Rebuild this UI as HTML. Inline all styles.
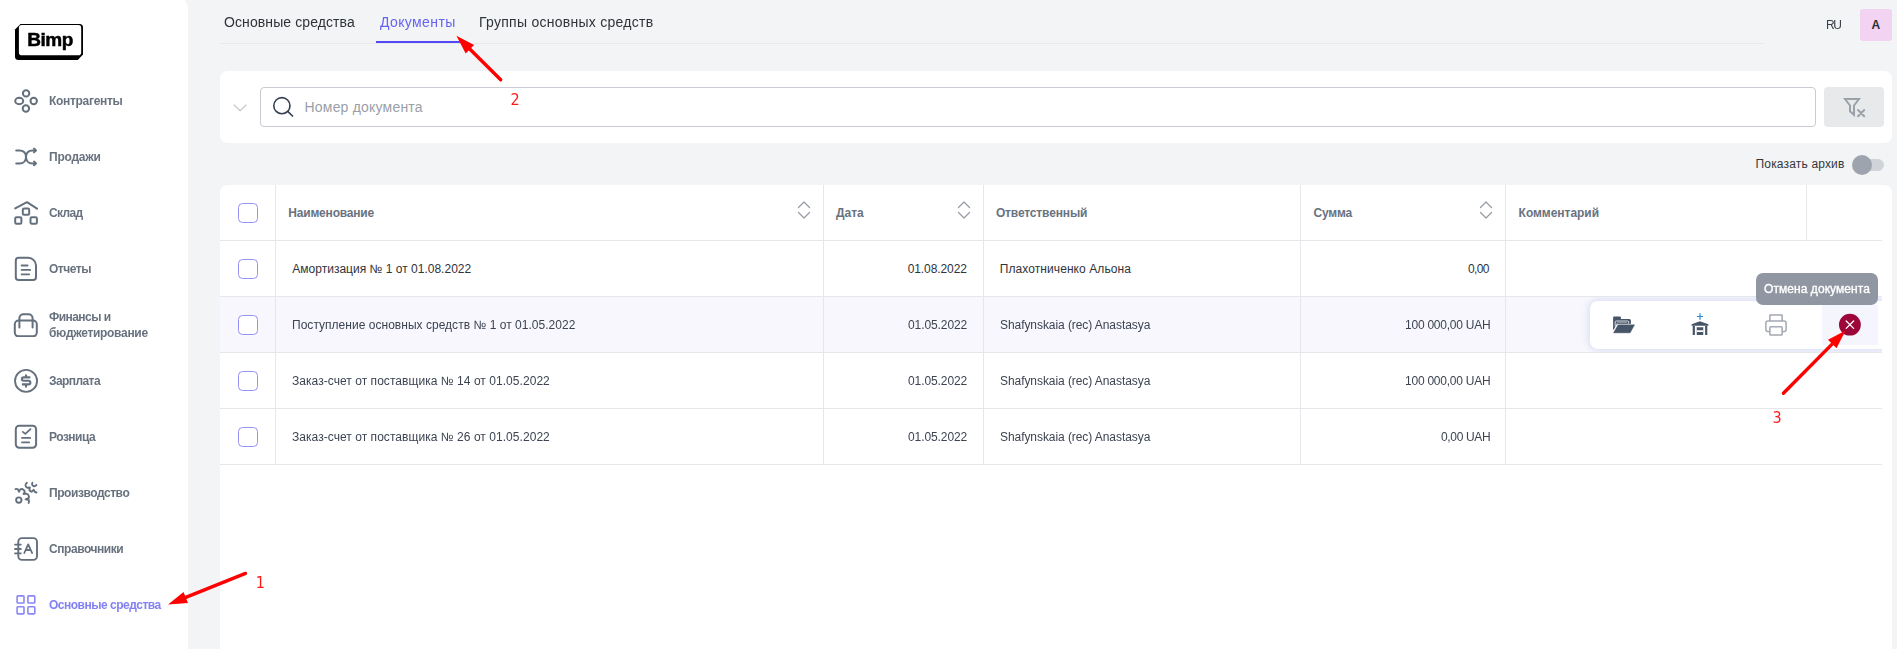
<!DOCTYPE html>
<html lang="ru">
<head>
<meta charset="utf-8">
<title>Bimp — Документы</title>
<style>
*{box-sizing:border-box;margin:0;padding:0}
html,body{width:1897px;height:649px;overflow:hidden}
body{position:relative;background:#f3f4f6;font-family:"Liberation Sans",sans-serif;color:#333;font-size:12px}
.abs{position:absolute}
.t{position:absolute;white-space:nowrap;line-height:1}
#side{position:absolute;left:0;top:-6px;width:188px;height:660px;background:#fff;border-top-right-radius:16px}
#logo{position:absolute}
.ic{position:absolute;left:13px;width:26px;height:26px;fill:none;stroke:#64707d;stroke-width:2;stroke-linecap:round;stroke-linejoin:round}
#tabline{position:absolute;left:220px;top:43px;width:1544px;height:1px;background:#e8e9ec}
#tabact{position:absolute;left:376px;top:41px;width:84px;height:2px;background:#5248f5}
.panel{position:absolute;background:#fff;border-radius:8px}
#inp{position:absolute;left:260px;top:87px;width:1556px;height:40px;border:1px solid #c8cbd1;border-radius:4px;background:#fff}
#fbtn{position:absolute;left:1824px;top:87px;width:60px;height:40px;border-radius:4px;background:#e8e9eb}
.hl{position:absolute;height:1px;background:#e6e7ea;left:220px;width:1662px}
.vl{position:absolute;width:1px;background:#e6e7ea;top:185px;height:280px}
.cb{position:absolute;left:238px;width:20px;height:20px;border:1px solid #9492f3;border-radius:4.5px;background:#fff}
.sort{position:absolute;top:198px;width:16px;height:24px;fill:none;stroke:#969ca5;stroke-width:1.25;stroke-linecap:round;stroke-linejoin:round}
.num{position:absolute;font-family:"DejaVu Sans Condensed","DejaVu Sans","Liberation Sans",sans-serif;font-size:16px;line-height:16px;color:#ff1a1a;white-space:nowrap}
</style>
</head>
<body>
<div id="side">
  <svg id="logo" viewBox="10 20 80 44" style="will-change:transform;left:10px;top:26px;width:80px;height:44px">
    <path d="M20.500 23.900H79.500a3.500 3.500 0 0 1 3.500 3.500V54.500L77.800 59.900H18.500a3.500 3.500 0 0 1-3.500-3.500V29.500z" fill="#000"/>
    <rect x="18.900" y="25.100" width="62.300" height="30.100" rx="2.800" fill="#fff"/>
    <text x="50.100" y="46" text-anchor="middle" font-family="Liberation Sans, sans-serif" font-weight="bold" font-size="19" fill="#000" stroke="#000" stroke-width="0.5" letter-spacing="-0.5">Bimp</text>
  </svg>
</div>
<svg class="ic" style="top:87px" viewBox="13 87 26 26"><circle cx="26.100" cy="93.400" r="3.200"/><ellipse cx="19.200" cy="101" rx="4" ry="3.200"/><circle cx="33.700" cy="101" r="3.200"/><circle cx="25.900" cy="108.500" r="3.200"/></svg>
<svg class="ic" style="top:143px" viewBox="13 143 26 26" stroke-width="1.800"><path d="M16.200 150.400H19.400C23.700 150.400 26 153.300 26 156.900C26 160.500 28.300 163.400 32.600 163.400H35.700"/><path d="M16.200 163.400H19.400C23.700 163.400 26 160.500 26 156.900C26 153.300 28.300 150.400 32.600 150.400H35.700"/><path d="M34 148.600l1.900 1.800-1.900 1.800M34 161.600l1.900 1.800-1.900 1.800"/></svg>
<svg class="ic" style="top:199px" viewBox="13 199 26 26" stroke-width="1.900"><path d="M15.200 208.400L27 202.200l10 6.400"/><rect x="22.800" y="208.600" width="6.400" height="6.200" rx="1.300"/><rect x="15.200" y="217.200" width="6.200" height="6.600" rx="1.400"/><rect x="30.500" y="217.200" width="6.400" height="6.600" rx="1.400"/></svg>
<svg class="ic" style="top:255px" viewBox="13 255 26 26"><path d="M18.600 257.800h9.600a7.800 7.800 0 0 1 7.800 7.800v11.600a2.800 2.800 0 0 1-2.800 2.800H18.600a2.800 2.800 0 0 1-2.800-2.800v-16.600a2.800 2.800 0 0 1 2.800-2.800z"/><path d="M21.600 265.500h6M21.600 269.900h8.600M21.600 274.300h7.600" stroke-width="1.800"/></svg>
<svg class="ic" style="top:311px" viewBox="13 311 26 26"><rect x="14.800" y="320.500" width="22" height="15.800" rx="3.800"/><path d="M19.400 327.400V318.200a4 4 0 0 1 4-4h5.200a4 4 0 0 1 4 4V327.400"/></svg>
<svg class="ic" style="top:367px" viewBox="13 367 26 26"><circle cx="26.050" cy="380.900" r="11" stroke-width="1.900"/><path d="M30.300 377.400H23.600a1.700 1.700 0 0 0 0 3.400H28.600a1.800 1.800 0 0 1 0 3.600H21.900M26 374.400v3M26 384.400v3" stroke-width="2.100" stroke-linecap="butt"/></svg>
<svg class="ic" style="top:423px" viewBox="13 423 26 26"><rect x="15.800" y="425.800" width="20.300" height="21.900" rx="3.400"/><path d="M22.800 431.900l2.500 2 5.200-4.700" stroke-width="1.800"/><path d="M22 437.900h8.200M22 442.400h7.200" stroke-width="1.800"/></svg>
<svg class="ic" style="top:479px" viewBox="13 479 26 26"><circle cx="18.800" cy="500.100" r="2.700" stroke-width="1.900"/><path d="M15.500 489.100q1.400-.6 2.300.2l1.200 2.400 1.300-2.300q1.800-1 3.200.4 1.400 1.100 1.200 2.300l-1.100 1.900 2.600-.4q1.600.2 2.400 1.800.7 1.200.2 2.500l-3.200 1.500 3.200.6q.6 1.400-.2 3" stroke-width="1.900"/><path d="M26.900 482.700q-1.700 1.200-1.300 3 .4 1.600 2 2.100l2.300-.4-.5 2.600q.8 1.500 2.400 1.700l1.800-1.900 1.200 2 1.700.7" stroke-width="1.900"/><path d="M32.400 482.800q-.8 1.400.2 2.600 1 1.100 2.200.8.900-.3 1.500-1.300" stroke-width="1.900"/></svg>
<svg class="ic" style="top:535px" viewBox="13 535 26 26"><rect x="18.300" y="538.100" width="18.700" height="21.800" rx="3.600" stroke-width="1.900"/><path d="M15 544.600h5.800M15 549h5.800M15 553.400h5.800" stroke-width="1.800"/><path d="M24.300 553l3.900-8.600 3.900 8.600M25.900 550h4.600" stroke-width="1.800"/></svg>
<svg class="ic" style="top:591px" viewBox="13 591 26 26"><rect x="17.1" y="595.9" width="6.900" height="7.100" rx="0.800" stroke="#8a88f6" stroke-width="1.600"/><rect x="27.9" y="595.9" width="6.900" height="7.100" rx="0.800" stroke="#8a88f6" stroke-width="1.600"/><rect x="17.1" y="606.8" width="6.900" height="7.100" rx="0.800" stroke="#8a88f6" stroke-width="1.600"/><rect x="27.9" y="606.8" width="6.900" height="7.100" rx="0.800" stroke="#8a88f6" stroke-width="1.600"/></svg>
<div id="tabline"></div><div id="tabact"></div>
<div class="abs" style="left:1860px;top:9px;width:32px;height:32px;border-radius:3px;background:#f3d3f2"></div>
<div class="panel" style="left:220px;top:71px;width:1672px;height:72px"></div>
<svg class="abs" style="left:230px;top:98px" width="20" height="18" viewBox="230 98 20 18"><path d="M234.200 105l5.900 5.700 5.900-5.700" fill="none" stroke="#c9ccd2" stroke-width="1.400" stroke-linecap="round" stroke-linejoin="round"/></svg>
<div id="inp"></div>
<svg class="abs" style="left:270px;top:94px" width="26" height="26" viewBox="270 94 26 26"><circle cx="281.900" cy="105.700" r="8.100" fill="none" stroke="#364152" stroke-width="1.600"/><path d="M288 111.700l4.500 4.300" stroke="#364152" stroke-width="1.700" stroke-linecap="round"/></svg>
<div id="fbtn"></div>
<svg class="abs" style="left:1840px;top:94px" width="28" height="26" viewBox="1840 94 28 26"><path d="M1845 99h14l-5 6.500v9.200l-4-3.500v-5.700z" fill="none" stroke="#9ba1a9" stroke-width="2" stroke-linejoin="miter"/><path d="M1858 110l6.200 6.200M1864.200 110l-6.200 6.200" stroke="#9ba1a9" stroke-width="2" stroke-linecap="round"/></svg>
<div class="abs" style="left:1858px;top:159px;width:26px;height:12px;border-radius:6px;background:#d0d3d8"></div>
<div class="abs" style="left:1852px;top:155px;width:20px;height:20px;border-radius:10px;background:#9ea4ad"></div>
<div class="panel" style="left:220px;top:185px;width:1672px;height:480px"></div>
<div class="abs" style="left:220px;top:297px;width:1662px;height:55px;background:#f7f7fd"></div>
<div class="hl" style="top:240px"></div>
<div class="hl" style="top:296px"></div>
<div class="hl" style="top:352px"></div>
<div class="hl" style="top:408px"></div>
<div class="hl" style="top:464px"></div>
<div class="vl" style="left:275px"></div>
<div class="vl" style="left:823px"></div>
<div class="vl" style="left:983px"></div>
<div class="vl" style="left:1300px"></div>
<div class="vl" style="left:1505px"></div>
<div class="vl" style="left:1806px;height:56px"></div>
<div class="cb" style="top:203px"></div>
<div class="cb" style="top:259px"></div>
<div class="cb" style="top:315px"></div>
<div class="cb" style="top:371px"></div>
<div class="cb" style="top:427px"></div>
<svg class="sort" style="left:796px" viewBox="0 0 16 24"><path d="M2.500 9.500L8 4l5.500 5.500M2.500 14.500L8 20l5.500-5.500"/></svg>
<svg class="sort" style="left:956px" viewBox="0 0 16 24"><path d="M2.500 9.500L8 4l5.500 5.500M2.500 14.500L8 20l5.500-5.500"/></svg>
<svg class="sort" style="left:1478px" viewBox="0 0 16 24"><path d="M2.500 9.500L8 4l5.500 5.500M2.500 14.500L8 20l5.500-5.500"/></svg>
<div class="abs" style="left:1560px;top:297px;width:322px;height:55px;overflow:hidden"><div class="abs" style="left:30px;top:4px;width:300px;height:48px;background:#fff;border-radius:8px 0 0 8px;box-shadow:0 0 7px 1px rgba(185,188,235,.5)"></div></div>
<div class="abs" style="left:1882px;top:294px;width:10px;height:62px;background:#fff"></div>
<div class="abs" style="left:1822px;top:305px;width:56px;height:40px;background:#f5f5fd"></div>
<svg class="abs" style="left:1611px;top:312px" width="26" height="26" viewBox="1611 312 26 26"><path d="M1613.100 330V317.500q0-1 1-1h5.800q1 0 1 1v1.400h8.400q1.600 0 1.600 1.600v3.600h-14.300l-2.500 4.900z" fill="#475569"/><path d="M1615.200 326.500v-4.400q0-1.100 1.100-1.100h11.300q1.100 0 1.100 1.100v1.600" fill="none" stroke="#e4e7ec" stroke-width=".9"/><path d="M1616.900 325.500v-2.200q0-.6.600-.6h9q.6 0 .6.600" fill="none" stroke="#aab1bb" stroke-width=".8"/><path d="M1618.600 324.300h15.700q.9 0 .5.900l-4 7.400q-.4.700-1.100.7h-16q-.9 0-.5-.8l4.300-7.500q.4-.7 1.100-.7z" fill="#475569" stroke="#fff" stroke-width=".5"/></svg>
<svg class="abs" style="left:1687px;top:311px" width="26" height="28" viewBox="1687 311 26 28"><path d="M1700 313.300v6.400M1696.900 316.500h6.200" stroke="#2e8bcf" stroke-width="1.200" fill="none"/><path d="M1691.600 324.200l8.300-3 8.500 3v1.600h-16.800z" fill="#475569"/><path d="M1692.700 325.800h2.200v9.100h-2.200zM1705.100 325.800h2.200v9.100h-2.200z" fill="#475569"/><path d="M1696.900 327.300h6.200v3h-6.200zM1696.900 332h6.200v2.900h-6.200z" fill="#475569"/><path d="M1696.400 326.600v8.300M1703.600 326.600v8.300" stroke="#b9bfc8" stroke-width=".6" fill="none"/></svg>
<svg class="abs" style="left:1763px;top:312px" width="26" height="26" viewBox="1763 312 26 26" fill="none" stroke="#a3a9b1" stroke-width="1.500" stroke-linejoin="round"><path d="M1769.900 321v-6h12.200v6"/><path d="M1769.900 331.400h-2a2 2 0 0 1-2-2v-6.400a2 2 0 0 1 2-2h16.200a2 2 0 0 1 2 2v6.400a2 2 0 0 1-2 2h-2"/><rect x="1769.900" y="326.700" width="12.200" height="8.400" rx=".8"/></svg>
<svg class="abs" style="left:1837px;top:312px" width="26" height="26" viewBox="1837 312 26 26"><circle cx="1849.900" cy="324.700" r="10.900" fill="#9c0638"/><path d="M1846.200 321l7.400 7.400M1853.600 321l-7.400 7.400" stroke="#fff" stroke-width="1.300" stroke-linecap="round"/></svg>
<div class="abs" style="left:1756px;top:273px;width:122px;height:32px;border-radius:7px;background:#9097a2"></div>
<div class="t" style="left:48.60px;top:94.84px;font-size:12px;color:#68727f;letter-spacing:-0.308px;font-weight:bold;will-change:transform;">Контрагенты</div>
<div class="t" style="left:48.60px;top:150.84px;font-size:12px;color:#68727f;letter-spacing:-0.238px;font-weight:bold;will-change:transform;">Продажи</div>
<div class="t" style="left:48.60px;top:206.84px;font-size:12px;color:#68727f;letter-spacing:-0.654px;font-weight:bold;will-change:transform;">Склад</div>
<div class="t" style="left:48.60px;top:262.84px;font-size:12px;color:#68727f;letter-spacing:-0.474px;font-weight:bold;will-change:transform;">Отчеты</div>
<div class="t" style="left:48.60px;top:310.54px;font-size:12px;color:#68727f;letter-spacing:-0.543px;font-weight:bold;will-change:transform;">Финансы и</div>
<div class="t" style="left:48.60px;top:326.74px;font-size:12px;color:#68727f;letter-spacing:-0.309px;font-weight:bold;will-change:transform;">бюджетирование</div>
<div class="t" style="left:48.60px;top:374.84px;font-size:12px;color:#68727f;letter-spacing:-0.578px;font-weight:bold;will-change:transform;">Зарплата</div>
<div class="t" style="left:48.60px;top:430.84px;font-size:12px;color:#68727f;letter-spacing:-0.498px;font-weight:bold;will-change:transform;">Розница</div>
<div class="t" style="left:48.60px;top:486.84px;font-size:12px;color:#68727f;letter-spacing:-0.441px;font-weight:bold;will-change:transform;">Производство</div>
<div class="t" style="left:48.60px;top:542.84px;font-size:12px;color:#68727f;letter-spacing:-0.447px;font-weight:bold;will-change:transform;">Справочники</div>
<div class="t" style="left:48.60px;top:598.84px;font-size:12px;color:#8381f4;letter-spacing:-0.492px;font-weight:bold;will-change:transform;">Основные средства</div>
<div class="t" style="left:224.20px;top:15.15px;font-size:14px;color:#2f3338;letter-spacing:0.097px;will-change:transform;">Основные средства</div>
<div class="t" style="left:379.90px;top:15.15px;font-size:14px;color:#6663f2;letter-spacing:0.387px;will-change:transform;">Документы</div>
<div class="t" style="left:479.00px;top:15.15px;font-size:14px;color:#2f3338;letter-spacing:0.268px;will-change:transform;">Группы основных средств</div>
<div class="t" style="left:1826.30px;top:18.74px;font-size:12px;color:#3a404a;letter-spacing:-1.366px;will-change:transform;">RU</div>
<div class="t" style="left:1871.60px;top:18.74px;font-size:12px;color:#2a2e35;letter-spacing:0.000px;font-weight:bold;">A</div>
<div class="t" style="left:304.50px;top:100.15px;font-size:14px;color:#9a9fa8;letter-spacing:0.203px;">Номер документа</div>
<div class="t" style="left:1755.50px;top:158.34px;font-size:12px;color:#33373d;letter-spacing:0.172px;">Показать архив</div>
<div class="t" style="left:288.30px;top:206.84px;font-size:12px;color:#69727f;letter-spacing:-0.197px;font-weight:bold;">Наименование</div>
<div class="t" style="left:836.10px;top:206.84px;font-size:12px;color:#69727f;letter-spacing:-0.067px;font-weight:bold;">Дата</div>
<div class="t" style="left:995.90px;top:206.84px;font-size:12px;color:#69727f;letter-spacing:-0.146px;font-weight:bold;">Ответственный</div>
<div class="t" style="left:1313.60px;top:206.84px;font-size:12px;color:#69727f;letter-spacing:-0.244px;font-weight:bold;">Сумма</div>
<div class="t" style="left:1518.60px;top:206.84px;font-size:12px;color:#69727f;letter-spacing:-0.033px;font-weight:bold;">Комментарий</div>
<div class="t" style="left:292.30px;top:262.64px;font-size:12px;color:#2f333a;letter-spacing:0.009px;">Амортизация № 1 от 01.08.2022</div>
<div class="t" style="left:907.70px;top:262.64px;font-size:12px;color:#2f333a;letter-spacing:-0.087px;">01.08.2022</div>
<div class="t" style="left:999.80px;top:262.64px;font-size:12px;color:#2f333a;letter-spacing:0.079px;">Плахотниченко Альона</div>
<div class="t" style="left:1467.90px;top:262.64px;font-size:12px;color:#2f333a;letter-spacing:-0.627px;">0,00</div>
<div class="t" style="left:292.30px;top:318.64px;font-size:12px;color:#3c4452;letter-spacing:0.026px;will-change:transform;">Поступление основных средств № 1 от 01.05.2022</div>
<div class="t" style="left:907.70px;top:318.64px;font-size:12px;color:#3c4452;letter-spacing:-0.087px;will-change:transform;">01.05.2022</div>
<div class="t" style="left:999.80px;top:318.64px;font-size:12px;color:#3c4452;letter-spacing:-0.068px;will-change:transform;">Shafynskaia (rec) Anastasya</div>
<div class="t" style="left:1404.70px;top:318.64px;font-size:12px;color:#3c4452;letter-spacing:-0.236px;will-change:transform;">100 000,00 UAH</div>
<div class="t" style="left:292.30px;top:374.64px;font-size:12px;color:#3c4452;letter-spacing:0.047px;will-change:transform;">Заказ-счет от поставщика № 14 от 01.05.2022</div>
<div class="t" style="left:907.70px;top:374.64px;font-size:12px;color:#3c4452;letter-spacing:-0.087px;will-change:transform;">01.05.2022</div>
<div class="t" style="left:999.80px;top:374.64px;font-size:12px;color:#3c4452;letter-spacing:-0.068px;will-change:transform;">Shafynskaia (rec) Anastasya</div>
<div class="t" style="left:1404.70px;top:374.64px;font-size:12px;color:#3c4452;letter-spacing:-0.236px;will-change:transform;">100 000,00 UAH</div>
<div class="t" style="left:292.30px;top:430.64px;font-size:12px;color:#3c4452;letter-spacing:0.047px;will-change:transform;">Заказ-счет от поставщика № 26 от 01.05.2022</div>
<div class="t" style="left:907.70px;top:430.64px;font-size:12px;color:#3c4452;letter-spacing:-0.087px;will-change:transform;">01.05.2022</div>
<div class="t" style="left:999.80px;top:430.64px;font-size:12px;color:#3c4452;letter-spacing:-0.068px;will-change:transform;">Shafynskaia (rec) Anastasya</div>
<div class="t" style="left:1440.70px;top:430.64px;font-size:12px;color:#3c4452;letter-spacing:-0.337px;will-change:transform;">0,00 UAH</div>
<div class="t" style="left:1763.80px;top:283.14px;font-size:12px;color:#ffffff;letter-spacing:0.065px;-webkit-text-stroke:0.35px #fff;will-change:transform;">Отмена документа</div>
<svg class="abs" style="left:0;top:0" width="1897" height="649" viewBox="0 0 1897 649">
<path d="M183.9 598.2L245.5 573.4" stroke="#ff0000" stroke-width="3.4" stroke-linecap="round" fill="none"/><path d="M168.1 604.6L188.0 603.1L183.5 591.9z" fill="#ff0000"/>
<path d="M468.5 47.8L500.7 79.8" stroke="#ff0000" stroke-width="3.4" stroke-linecap="round" fill="none"/><path d="M456.4 35.8L465.7 53.4L474.1 44.9z" fill="#ff0000"/>
<path d="M1833.6 342.6L1783.4 393.2" stroke="#ff0000" stroke-width="3.4" stroke-linecap="round" fill="none"/><path d="M1845.6 330.5L1828.0 339.8L1836.5 348.2z" fill="#ff0000"/>
</svg>
<div class="num" style="left:255.7px;top:574.7px">1</div>
<div class="num" style="left:510.6px;top:91.6px">2</div>
<div class="num" style="left:1772.5px;top:409.8px">3</div>
</body>
</html>
